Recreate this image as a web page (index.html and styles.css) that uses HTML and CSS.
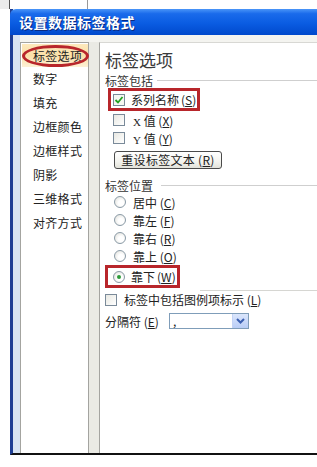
FILE: index.html
```html
<!doctype html>
<html>
<head>
<meta charset="utf-8">
<title>设置数据标签格式</title>
<link rel="stylesheet" href="styles.css">
</head>
<body>
<div class="top-strip"><span class="ts-grey"></span><span class="ts-white"></span><span class="ts-rest"></span></div>
<div class="window">
	<div class="titlebar">设置数据标签格式</div>
	<div class="win-body">
		<div class="frame"></div>
		<ul class="nav">
			<li class="active">标签选项<span class="oval"></span></li>
			<li>数字</li>
			<li>填充</li>
			<li>边框颜色</li>
			<li>边框样式</li>
			<li>阴影</li>
			<li>三维格式</li>
			<li>对齐方式</li>
		</ul>
		<div class="gutter"></div>
		<div class="panel">
			<h1>标签选项</h1>
			<div class="group">标签包括</div>
			<div class="mark mark-name">
				<span class="chk checked"><svg width="10" height="10" viewBox="0 0 10 10"><path d="M1.5 5 L4 7.5 L8.5 2" fill="none" stroke="#21a121" stroke-width="1.8"/></svg></span>
				<span>系列名称<span class="key">(<u>S</u>)</span></span>
			</div>
			<div class="row row-indent"><span class="chk"></span><span><i class="lat">X</i> 值 (<u>X</u>)</span></div>
			<div class="row row-indent"><span class="chk"></span><span><i class="lat">Y</i> 值 (<u>Y</u>)</span></div>
			<div class="btn">重设标签文本 (<u>R</u>)</div>
			<div class="group group-pos">标签位置</div>
			<div class="row row-radio"><span class="radio"></span><span>居中 (<u>C</u>)</span></div>
			<div class="row row-radio"><span class="radio"></span><span>靠左 (<u>F</u>)</span></div>
			<div class="row row-radio"><span class="radio"></span><span>靠右 (<u>R</u>)</span></div>
			<div class="row row-radio"><span class="radio"></span><span>靠上 (<u>O</u>)</span></div>
			<div class="mark mark-below"><span class="radio on"></span><span>靠下<span class="key">(<u>W</u>)</span></span></div>
			<div class="sep"></div>
			<div class="row row-legend"><span class="chk"></span><span>标签中包括图例项标示 (<u>L</u>)</span></div>
			<div class="row row-split">
				<span class="split-label">分隔符 (<u>E</u>)</span>
				<span class="select"><span class="select-val">,</span><span class="select-btn"><svg width="9" height="6" viewBox="0 0 9 6"><path d="M1 1 L4.5 4.5 L8 1" fill="none" stroke="#3a5fb0" stroke-width="2"/></svg></span></span>
			</div>
		</div>
	</div>
</div>
</body>
</html>
```
FILE: styles.css
```css
* {padding:0;margin:0;box-sizing:border-box;}
body {background:#fff;
	font-family:"Noto Sans CJK SC","Liberation Sans",sans-serif;
	font-size:12px;
	color:#222;
	width:317px;
	height:467px;
	overflow:hidden;
	white-space:nowrap;
}
.top-strip {display:flex;height:9px;}
.ts-grey {width:10px;background:#ececec;border-right:1px solid #555;}
.ts-white {width:78px;background:#fff;border-right:1px solid #999;}
.ts-rest {flex:1;background:#fff;}

.window {margin-left:10px;
	height:446px;
	display:flex;
	flex-direction:column;
	border-left:3px solid #1d3d94;
	border-bottom:2px solid #111;
}
.titlebar {height:26px;
	margin-left:-3px;
	padding-left:9px;
	border-top-left-radius:6px;
	background:linear-gradient(#4a95f8 0,#1a6beb 18%,#0a5ce2 55%,#0049cc 100%);
	color:#fff;
	font-size:14px;
	font-weight:bold;
	line-height:27px;
	letter-spacing:0.5px;
	text-shadow:1px 1px 0 #0a2a80;
}
.win-body {flex:1;
	display:flex;
	background:#f4f4f0;
	padding-top:7px;
}
.frame {width:7px;margin-top:-7px;background:#d7e3f3;}
.nav {list-style:none;
	width:69px;
	background:#fff;
	border:1px solid #a4a4a0;
	border-bottom:none;
}
.nav li {position:relative;
	height:24px;
	line-height:24px;
	padding-left:12px;
	letter-spacing:0.3px;
}
.nav li.active {background:linear-gradient(#fde9bd,#fbe0a8 50%,#fdf1d6);margin:1px 0 0 1px;height:23px;padding-left:11px;}
.oval {position:absolute;
	left:0;
	top:1px;
	width:67px;
	height:22px;
	border:3px solid #b8262b;
	border-radius:50%;
}
.gutter {width:10px;background:#eaeae4;}
.panel {flex:1;
	background:#fff;
	border-left:1px solid #a4a4a0;
	border-top:1px solid #d8d8d4;
	padding-left:5px;
}
.panel h1 {font-size:17px;
	font-weight:normal;
	line-height:22px;
	margin-top:6px;
	color:#3a3a3a;
}
.group {display:flex;
	align-items:center;
	height:16px;
	margin-top:1px;
	color:#333;
}
.group::after {content:"";
	flex:1;
	margin-left:4px;
	border-top:1px solid #cfcfcf;
}
.group-pos {margin-top:8px;}
.group-pos::after {margin-left:8px;}
.mark {display:flex;
	align-items:center;
	height:23px;
	border:3px solid #b8262b;
}
.mark-name {width:92px;margin-left:3px;padding-left:2px;gap:6px;}
.mark-below {width:75px;padding-left:5px;gap:6px;}
.key {margin-left:2px;}
.row {display:flex;align-items:center;height:18px;}
.row-indent {padding-left:8px;gap:8px;}
.row-radio {padding-left:9px;gap:7px;}
.row-legend {height:17px;gap:7px;}
.row-split {height:16px;margin-top:5px;}
.chk {display:inline-flex;
	align-items:center;
	justify-content:center;
	flex:none;
	width:12px;
	height:12px;
	border:1px solid #7a8a99;
	background:linear-gradient(135deg,#e8e8e2,#fff);
}
.chk.checked {background:#f4f7f1;}
.radio {flex:none;
	width:12px;
	height:12px;
	border:1px solid #8a9aa6;
	border-radius:50%;
	background:radial-gradient(circle at 60% 60%,#fff 30%,#dcdcd6);
	position:relative;
}
.radio.on::after {content:"";
	position:absolute;
	left:3px;
	top:3px;
	width:4px;
	height:4px;
	border-radius:50%;
	background:#2d9b3a;
}
.lat {font-style:normal;font-family:"Liberation Serif",serif;font-size:11px;}
u {text-decoration:underline;}
.btn {width:108px;
	height:18px;
	margin:4px 0 0 9px;
	border:1px solid #4a4a4a;
	border-radius:3px;
	background:linear-gradient(#fff,#f3f3ee 60%,#e2e2da);
	text-align:center;
	line-height:16px;
	letter-spacing:0.3px;
}
.sep {height:1px;margin:2px 0 0 95px;background:#d6d6d2;}
.split-label {width:64px;flex:none;}
.select {display:flex;
	width:80px;
	height:16px;
	border:1px solid #7f9db9;
	background:#fff;
}
.select-val {flex:1;padding-left:3px;line-height:13px;}
.select-btn {display:flex;
	align-items:center;
	justify-content:center;
	width:16px;
	background:linear-gradient(#dbe6fc,#b9cdf6);
	border-left:1px solid #c3d3f5;
}
```
